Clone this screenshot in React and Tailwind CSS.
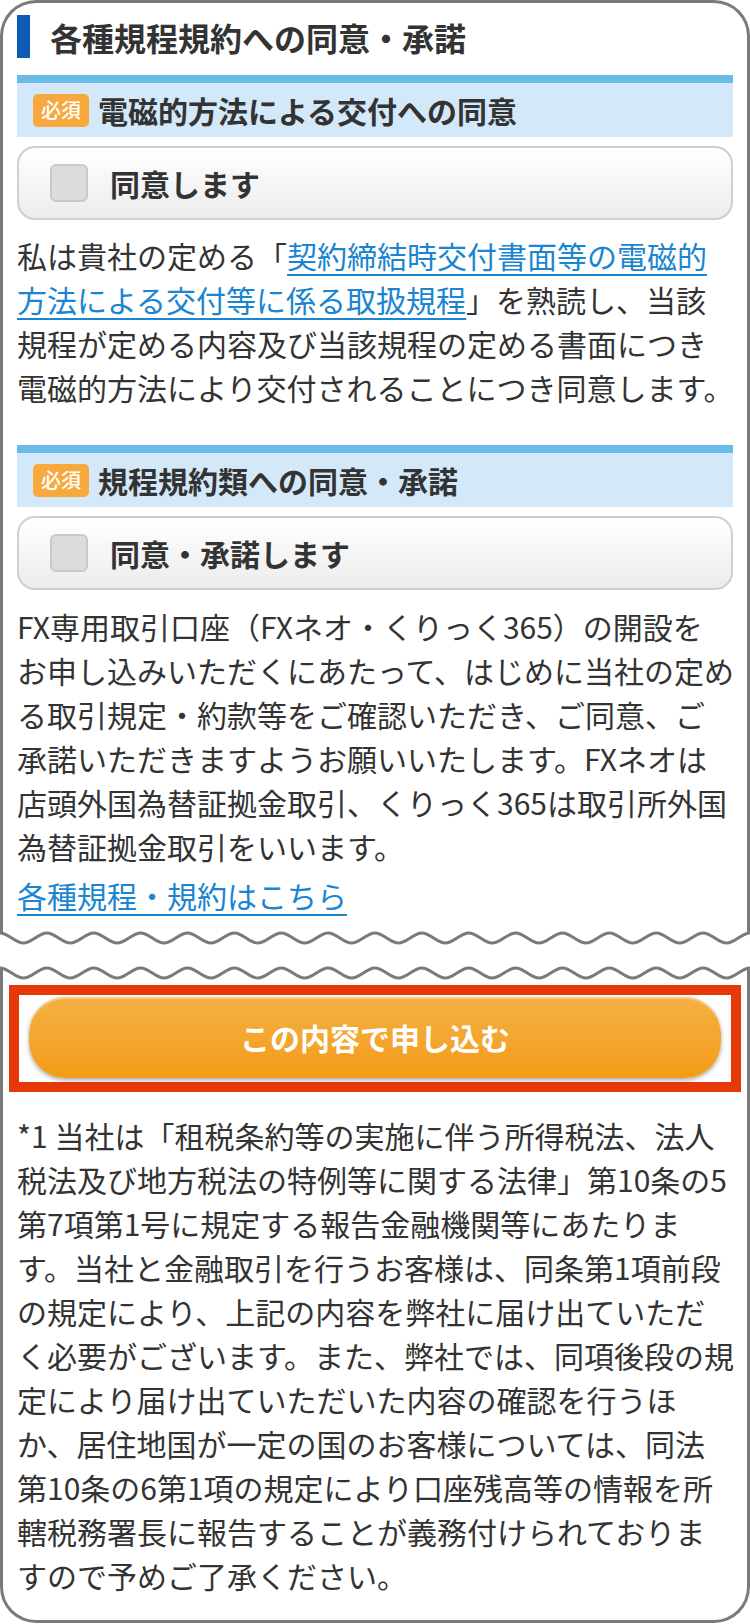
import React from 'react'

const P = 750 / 16

function wavePath(y, a) {
  let d = `M0 ${y - a}`
  for (let i = 0; i < 32; i++) {
    const h = P / 2
    const x0 = i * h
    const from = i % 2 === 0 ? y - a : y + a
    const to = i % 2 === 0 ? y + a : y - a
    d += ` C${(x0 + h * 0.36).toFixed(2)} ${from} ${(x0 + h * 0.64).toFixed(2)} ${to} ${(x0 + h).toFixed(2)} ${to}`
  }
  return d
}

function Badge() {
  return (
    <span className="flex h-[33px] w-[56px] shrink-0 items-center justify-center rounded-[5px] bg-[#f8a93e] text-[20px] font-medium leading-none text-white">
      必須
    </span>
  )
}

function SectionHead({ children }) {
  return (
    <div className="flex h-[62px] items-center gap-[9px] border-t-[8px] border-[#6bbbe9] bg-[#d3e8f8] pl-[16px]">
      <Badge />
      <h3 className="text-[30px] font-bold leading-none text-[#333]">{children}</h3>
    </div>
  )
}

function AgreeCard({ label }) {
  return (
    <label className="mt-[9px] flex h-[74px] items-center rounded-[18px] border-2 border-[#cfcfcf] bg-gradient-to-b from-white to-[#ececec] pl-[31px]">
      <span className="h-[38px] w-[38px] shrink-0 rounded-[6px] border-2 border-[#c9c9c9] bg-[#dcdcdc]" />
      <span className="ml-[22px] text-[30px] font-bold leading-none text-[#333]">{label}</span>
    </label>
  )
}

export default function App() {
  const link = 'text-[#1a85d0] underline decoration-2 underline-offset-[6px]'
  return (
    <div className="bg-white font-['Noto_Sans_CJK_JP','Noto_Sans',sans-serif] text-[#333]">
      <div className="rounded-t-[36px] border-x-[3px] border-t-[3px] border-[#7a7a7a] px-[14px] pb-[5px] pt-[12px]">
        <div className="flex h-[43px] items-center">
          <span className="h-full w-[13px] bg-[#0b5cb2]" />
          <h2 className="ml-[20px] text-[32px] font-bold leading-none text-[#333]">各種規程規約への同意・承諾</h2>
        </div>

        <div className="mt-[17px]">
          <SectionHead>電磁的方法による交付への同意</SectionHead>
          <AgreeCard label="同意します" />
          <p className="mt-[13px] whitespace-nowrap text-[30px] leading-[44px]">
            私は貴社の定める「<a className={link}>契約締結時交付書面等の電磁的<br />方法による交付等に係る取扱規程</a>」を熟読し、当該<br />
            規程が定める内容及び当該規程の定める書面につき<br />
            電磁的方法により交付されることにつき同意します。
          </p>
        </div>

        <div className="mt-[36px]">
          <SectionHead>規程規約類への同意・承諾</SectionHead>
          <AgreeCard label="同意・承諾します" />
          <p className="mt-[14px] whitespace-nowrap text-[30px] leading-[44px]">
            FX専用取引口座（FXネオ・くりっく365）の開設を<br />
            お申し込みいただくにあたって、はじめに当社の定め<br />
            る取引規定・約款等をご確認いただき、ご同意、ご<br />
            承諾いただきますようお願いいたします。FXネオは<br />
            店頭外国為替証拠金取引、くりっく365は取引所外国<br />
            為替証拠金取引をいいます。
          </p>
          <p className="mt-[5px] text-[30px] leading-[44px]">
            <a className={link}>各種規程・規約はこちら</a>
          </p>
        </div>
      </div>

      <svg width="750" height="58" viewBox="0 0 750 58" className="block" fill="none" stroke="#7a7a7a" strokeWidth="3">
        <path d={wavePath(16, 5)} />
        <path d="M1.5 0V11M748.5 0V11" />
        <path d={wavePath(51, 5)} />
        <path d="M1.5 46V58M748.5 46V58" />
      </svg>

      <div className="rounded-b-[36px] border-x-[3px] border-b-[3px] border-[#7a7a7a] pb-[23px] pt-[5px]">
        <div className="mx-[6px] border-[10px] border-[#e5390a] px-[10px] pb-[4px] pt-[2px]">
          <button className="flex h-[81px] w-full items-center justify-center rounded-[36px] bg-gradient-to-b from-[#f5b042] to-[#f39c12] text-[30px] font-bold text-white shadow-[0_2px_4px_rgba(0,0,0,0.35),inset_0_2px_1px_rgba(255,255,255,0.35)]">
            この内容で申し込む
          </button>
        </div>
        <p className="mt-[21px] whitespace-nowrap px-[14px] text-[30px] leading-[44px]">
          *1 当社は「租税条約等の実施に伴う所得税法、法人<br />
          税法及び地方税法の特例等に関する法律」第10条の5<br />
          第7項第1号に規定する報告金融機関等にあたりま<br />
          す。当社と金融取引を行うお客様は、同条第1項前段<br />
          の規定により、上記の内容を弊社に届け出ていただ<br />
          く必要がございます。また、弊社では、同項後段の規<br />
          定により届け出ていただいた内容の確認を行うほ<br />
          か、居住地国が一定の国のお客様については、同法<br />
          第10条の6第1項の規定により口座残高等の情報を所<br />
          轄税務署長に報告することが義務付けられておりま<br />
          すので予めご了承ください。
        </p>
      </div>
    </div>
  )
}
